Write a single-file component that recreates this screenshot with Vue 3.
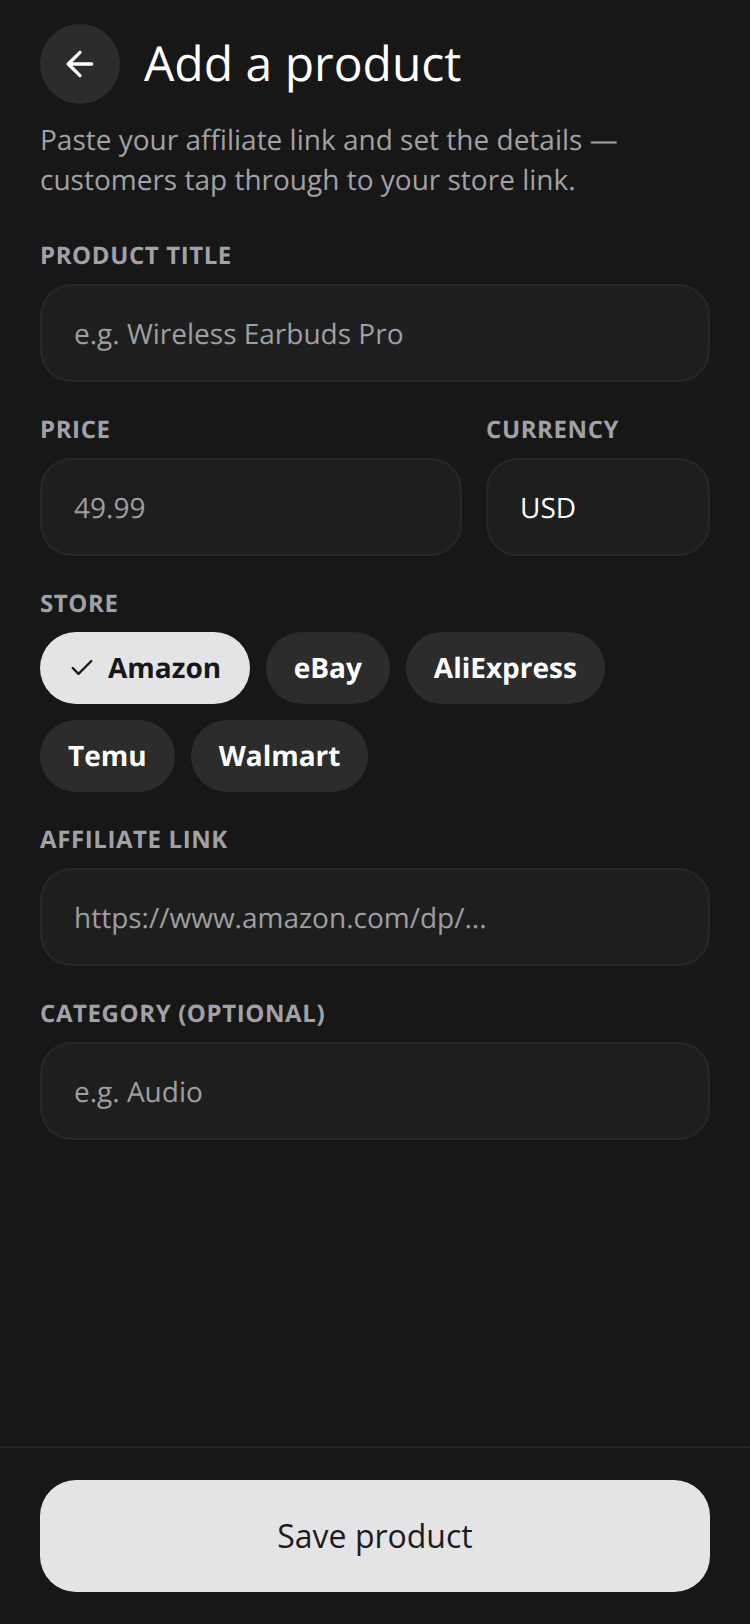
<script setup>
const stores = [
  { name: 'Amazon', active: true },
  { name: 'eBay' },
  { name: 'AliExpress' },
  { name: 'Temu' },
  { name: 'Walmart' },
]
</script>

<template>
  <div class="page">
    <main class="main">
      <header class="head">
        <button class="back" aria-label="Back">
          <svg width="40" height="40" viewBox="0 0 24 24" fill="none" stroke="#fff" stroke-width="2" stroke-linecap="round" stroke-linejoin="round">
            <path d="M19 12H5" />
            <path d="M12 19l-7-7 7-7" />
          </svg>
        </button>
        <h1 class="title">Add a product</h1>
      </header>
      <p class="sub">Paste your affiliate link and set the details — customers tap through to your store link.</p>

      <section class="field">
        <div class="label">PRODUCT TITLE</div>
        <div class="input ph">e.g. Wireless Earbuds Pro</div>
      </section>

      <div class="row">
        <section class="field grow">
          <div class="label">PRICE</div>
          <div class="input ph">49.99</div>
        </section>
        <section class="field cur">
          <div class="label">CURRENCY</div>
          <div class="input">USD</div>
        </section>
      </div>

      <section class="field">
        <div class="label">STORE</div>
        <div class="chips">
          <div v-for="s in stores" :key="s.name" class="chip" :class="{ on: s.active }">
            <svg v-if="s.active" class="check" width="28" height="28" viewBox="0 0 24 24" fill="none" stroke="#171717" stroke-width="2" stroke-linecap="round" stroke-linejoin="round">
              <path d="M20 6 9 17l-5-5" />
            </svg>
            <span>{{ s.name }}</span>
          </div>
        </div>
      </section>

      <section class="field">
        <div class="label">AFFILIATE LINK</div>
        <div class="input ph">https://www.amazon.com/dp/...</div>
      </section>

      <section class="field">
        <div class="label">CATEGORY (OPTIONAL)</div>
        <div class="input ph">e.g. Audio</div>
      </section>
    </main>
    <footer class="foot">
      <button class="save">Save product</button>
    </footer>
  </div>
</template>

<style>
html, body { margin: 0; background: #171717; }
</style>

<style scoped>
.page {
  height: 1624px;
  display: flex;
  flex-direction: column;
  background: #171717;
  font-family: "Open Sans", sans-serif;
  text-rendering: geometricPrecision;
  box-sizing: border-box;
  overflow: hidden;
}
.main { flex: 1; padding: 24px 40px 0; }
.head { display: flex; align-items: center; gap: 24px; }
.back {
  width: 80px; height: 80px; border-radius: 50%; border: 0; padding: 0;
  background: #2c2c2c; display: flex; align-items: center; justify-content: center;
}
.title { margin: 0; font-size: 48px; line-height: 60px; font-weight: 400; color: #fff; }
.sub { margin: 16px 0 41px; font-size: 28px; line-height: 40px; color: #a1a1a6; }
.field { margin-top: 33px; }
.label { font-size: 24px; line-height: 30px; font-weight: 700; letter-spacing: 0.6px; color: #a1a1aa; margin-bottom: 13px; }
.input {
  box-sizing: border-box; height: 98px; border: 2px solid #272727; border-radius: 32px;
  background: #1e1e1e; padding: 2px 32px 0; display: flex; align-items: center;
  font-size: 28px; color: #fff;
}
.ph { color: #9e9ea3; }
.row { display: flex; gap: 24px; }
.grow { flex: 1; }
.cur { width: 224px; }
.chips { display: flex; flex-wrap: wrap; gap: 16px; }
.chip {
  height: 72px; border-radius: 36px; padding: 0 28px; background: #2c2c2c; color: #fff;
  display: flex; align-items: center; gap: 12px; font-size: 28px; font-weight: 700;
}
.chip.on { background: #e4e4e7; color: #171717; padding-right: 28.5px; }
.foot { border-top: 2px solid #272727; padding: 32px 40px; }
.save {
  width: 100%; height: 112px; border: 0; border-radius: 36px; background: #e4e4e7; color: #1c1c1e;
  font-family: inherit; font-size: 32px; font-weight: 400; display: block; padding: 0 0 2px;
}
</style>
